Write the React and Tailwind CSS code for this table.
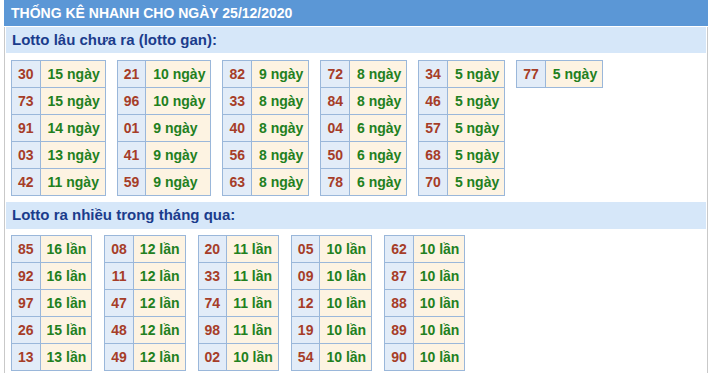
const gan = [
  [['30', '15 ngày'], ['73', '15 ngày'], ['91', '14 ngày'], ['03', '13 ngày'], ['42', '11 ngày']],
  [['21', '10 ngày'], ['96', '10 ngày'], ['01', '9 ngày'], ['41', '9 ngày'], ['59', '9 ngày']],
  [['82', '9 ngày'], ['33', '8 ngày'], ['40', '8 ngày'], ['56', '8 ngày'], ['63', '8 ngày']],
  [['72', '8 ngày'], ['84', '8 ngày'], ['04', '6 ngày'], ['50', '6 ngày'], ['78', '6 ngày']],
  [['34', '5 ngày'], ['46', '5 ngày'], ['57', '5 ngày'], ['68', '5 ngày'], ['70', '5 ngày']],
  [['77', '5 ngày']],
];

const nhieu = [
  [['85', '16 lần'], ['92', '16 lần'], ['97', '16 lần'], ['26', '15 lần'], ['13', '13 lần']],
  [['08', '12 lần'], ['11', '12 lần'], ['47', '12 lần'], ['48', '12 lần'], ['49', '12 lần']],
  [['20', '11 lần'], ['33', '11 lần'], ['74', '11 lần'], ['98', '11 lần'], ['02', '10 lần']],
  [['05', '10 lần'], ['09', '10 lần'], ['12', '10 lần'], ['19', '10 lần'], ['54', '10 lần']],
  [['62', '10 lần'], ['87', '10 lần'], ['88', '10 lần'], ['89', '10 lần'], ['90', '10 lần']],
];

function LotoTable({ rows, tight }) {
  const valPad = tight ? 'pl-[6px] pr-[5px]' : 'pl-[7px] pr-[5px]';
  return (
    <table className="border-collapse self-start">
      <tbody>
        {rows.map(([num, val]) => (
          <tr key={num}>
            <td className="h-[27px] border border-[#9ab7da] bg-[#e2ecf8] p-0 px-[6px] text-center text-[#a63d28]">
              {num}
            </td>
            <td className={`h-[27px] border border-[#9ab7da] bg-[#fdf3e2] p-0 ${valPad} text-left text-[#22801e]`}>
              {val}
            </td>
          </tr>
        ))}
      </tbody>
    </table>
  );
}

export default function App() {
  return (
    <div
      className="ml-[4px] w-[704px] bg-white text-[14px] font-bold"
      style={{ fontFamily: '"Liberation Sans", Arial, sans-serif' }}
    >
      {/* header bar */}
      <div className="flex h-[26px] items-center bg-[#5b97d6] pl-[7px] text-white">
        THỐNG KÊ NHANH CHO NGÀY 25/12/2020
      </div>

      <div className="border-x border-[#c9c9c9] pb-[4px]">
        <div className="mx-[1px] mt-[1px] flex h-[26px] items-center bg-[#d6e7f9] pl-[6px] text-[15px] text-[#1b3c8c]">
          Lotto lâu chưa ra (lotto gan):
        </div>
        <div className="mt-[7px] flex gap-[11px] px-[6px]">
          {gan.map((rows, i) => (
            <LotoTable key={i} rows={rows} />
          ))}
        </div>

        <div className="mx-[1px] mt-[6px] flex h-[27px] items-center bg-[#d6e7f9] pl-[6px] text-[15px] text-[#1b3c8c]">
          Lotto ra nhiều trong tháng qua:
        </div>
        <div className="mt-[6px] flex gap-[12px] px-[6px]">
          {nhieu.map((rows, i) => (
            <LotoTable key={i} rows={rows} tight />
          ))}
        </div>
      </div>
    </div>
  );
}
